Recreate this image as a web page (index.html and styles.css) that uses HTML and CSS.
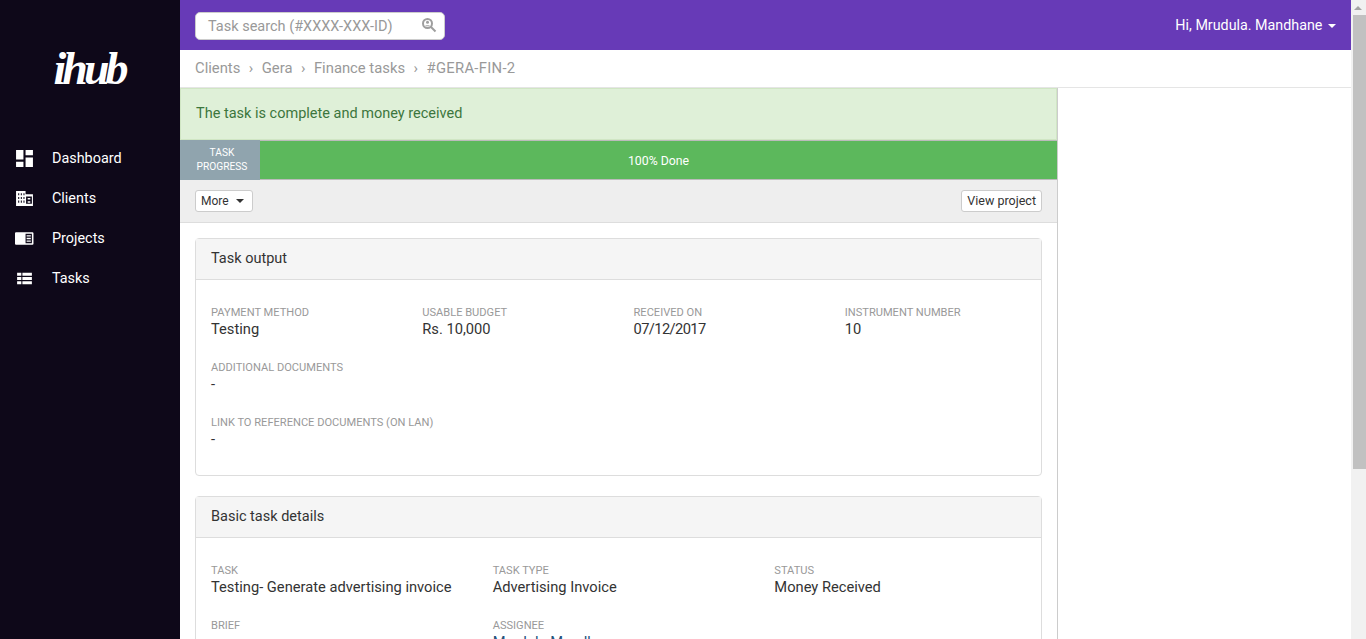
FILE: index.html
```html
<!DOCTYPE html>
<html lang="en">
<head>
    <title>Task details</title>
    <link rel="stylesheet" href="styles.css">
</head>
<body>
    <div class="app">
        <div class="sidebar">
            <div class="logo">ihub</div>
            <div class="nav">
                <a class="nav-item" href="#">
                    <svg class="nav-icon" viewBox="0 0 18 18"><path d="M1 1h7v9H1zM10 1h7v5h-7zM10 8h7v9h-7zM1 12h7v5H1z" fill="#fff"/></svg>
                    Dashboard
                </a>
                <a class="nav-item" href="#">
                    <svg class="nav-icon" viewBox="0 0 18 18"><path fill-rule="evenodd" d="M1 2h9v3h7v11H1zM3 4v2h1V4zM5.500 4v2h1V4zM8 4v2h1V4zM3 7.500v2h1v-2zM5.500 7.500v2h1v-2zM8 7.500v2h1v-2zM3 11v2h1v-2zM5.500 11v2h1v-2zM8 11v2h1v-2zM10.500 7v7H16V7zM12 8.500h2.500v1.500H12zM12 11.500h2.500V13H12z" fill="#fff"/></svg>
                    Clients
                </a>
                <a class="nav-item" href="#">
                    <svg class="nav-icon" viewBox="0 0 18 18"><path fill-rule="evenodd" d="M1 3h15.500a1 1 0 0 1 1 1v10a1 1 0 0 1-1 1H1a1 1 0 0 1-1-1V4a1 1 0 0 1 1-1zM10 4.500v9h6v-9zM11 6h4v1.200h-4zM11 8.400h4v1.200h-4zM11 10.800h4V12h-4z" fill="#fff"/></svg>
                    Projects
                </a>
                <a class="nav-item" href="#">
                    <svg class="nav-icon" viewBox="0 0 18 18"><path d="M2 3.500h4v3H2zM7 3.500h9v3H7zM2 7.500h4v3H2zM7 7.500h9v3H7zM2 11.500h4v3H2zM7 11.500h9v3H7z" fill="#fff"/></svg>
                    Tasks
                </a>
            </div>
        </div>
        <div class="main">
            <div class="topbar">
                <div class="search">
                    <span class="search-text">Task search (#XXXX-XXX-ID)</span>
                    <svg class="search-icon" viewBox="0 0 16 16"><circle cx="6.500" cy="6.500" r="4.500" fill="none" stroke="#9e9e9e" stroke-width="2"/><circle cx="6.500" cy="5.200" r="1.500" fill="#9e9e9e"/><path d="M3.800 9.200c.6-1.400 4.800-1.400 5.400 0z" fill="#9e9e9e"/><path d="M10 10l4.500 4.500" stroke="#9e9e9e" stroke-width="2"/></svg>
                </div>
                <div class="user">Hi, Mrudula. Mandhane <span class="caret"></span></div>
            </div>
            <div class="breadcrumb">
                <span>Clients</span><span class="sep">›</span>
                <span>Gera</span><span class="sep">›</span>
                <span>Finance tasks</span><span class="sep">›</span>
                <span class="crumb-id">#GERA-FIN-2</span>
            </div>
            <div class="task-pane">
                <div class="alert">The task is complete and money received</div>
                <div class="progress-row">
                    <div class="progress-label">TASK<br>PROGRESS</div>
                    <div class="progress-bar">100% Done</div>
                </div>
                <div class="toolbar">
                    <button class="btn btn-more">More <span class="caret caret-dark"></span></button>
                    <button class="btn">View project</button>
                </div>
                <div class="content">
                    <div class="card">
                        <div class="card-head">Task output</div>
                        <div class="card-body cols-4">
                            <div class="field"><div class="field-label">Payment method</div><div class="field-value">Testing</div></div>
                            <div class="field"><div class="field-label">Usable budget</div><div class="field-value">Rs. 10,000</div></div>
                            <div class="field"><div class="field-label">Received on</div><div class="field-value date">07/12/2017</div></div>
                            <div class="field"><div class="field-label">Instrument number</div><div class="field-value">10</div></div>
                            <div class="field full"><div class="field-label">Additional documents</div><div class="field-value">-</div></div>
                            <div class="field full"><div class="field-label">Link to reference documents (on LAN)</div><div class="field-value">-</div></div>
                        </div>
                    </div>
                    <div class="card">
                        <div class="card-head">Basic task details</div>
                        <div class="card-body cols-3">
                            <div class="field"><div class="field-label">Task</div><div class="field-value">Testing- Generate advertising invoice</div></div>
                            <div class="field"><div class="field-label">Task type</div><div class="field-value">Advertising Invoice</div></div>
                            <div class="field"><div class="field-label">Status</div><div class="field-value">Money Received</div></div>
                            <div class="field"><div class="field-label">Brief</div><div class="field-value">-</div></div>
                            <div class="field"><div class="field-label">Assignee</div><div class="field-value link">Mrudula Mandhane</div></div>
                        </div>
                    </div>
                </div>
            </div>
        </div>
        <div class="scrollbar">
            <div class="scroll-arrow"></div>
            <div class="scroll-thumb"></div>
        </div>
    </div>
</body>
</html>
```
FILE: styles.css
```css
* {
    box-sizing: border-box;
}
html, body {
    margin: 0;
    height: 100%;
    overflow: hidden;
}
body {
    font-family: Roboto, "Open Sans", sans-serif;
    font-size: 14.5px;
    color: #333;
    background-color: #fff;
}
.app {
    display: flex;
    height: 639px;
}
.sidebar {
    width: 180px;
    flex: none;
    background-color: #0e0819;
}
.logo {
    height: 138px;
    padding: 44px 2px 0 0;
    text-align: center;
    font-family: "Liberation Serif", serif;
    font-style: italic;
    font-weight: bold;
    font-size: 46px;
    letter-spacing: -4px;
    line-height: 50px;
    color: #fff;
}
.nav-item {
    display: flex;
    align-items: center;
    gap: 18px;
    height: 40px;
    padding-left: 15px;
    color: #fff;
    font-size: 14.4px;
    text-decoration: none;
}
.nav-icon {
    width: 19px;
    height: 19px;
}
.main {
    flex: 1;
    min-width: 0;
    overflow: hidden;
}
.topbar {
    display: flex;
    align-items: center;
    justify-content: space-between;
    height: 50px;
    padding: 2px 15px 0;
    background-color: #673ab7;
}
.search {
    display: flex;
    align-items: center;
    justify-content: space-between;
    width: 250px;
    height: 28px;
    padding: 0 7px 0 12px;
    background: #fff;
    border: 1px solid #ccc;
    border-radius: 5px;
    color: #999;
}
.search-icon {
    width: 16px;
    height: 16px;
    margin-top: -2px;
}
.user {
    margin-top: -2px;
    color: #fff;
    font-size: 14.3px;
}
.caret {
    display: inline-block;
    margin-left: 2px;
    vertical-align: middle;
    border-top: 4px solid #fff;
    border-left: 4px solid transparent;
    border-right: 4px solid transparent;
}
.caret-dark {
    margin-left: 4px;
    border-top-color: #333;
}
.breadcrumb {
    display: flex;
    align-items: center;
    gap: 8.500px;
    height: 38px;
    padding: 0 0 2px 15px;
    border-bottom: 1px solid #e5e5e5;
    color: #999;
    font-size: 14.8px;
}
.crumb-id {
    letter-spacing: .3px;
}
.sep {
    color: #999;
}
.task-pane {
    width: 878px;
    border-right: 1px solid #ccc;
}
.alert {
    height: 52px;
    padding: 15px 15px;
    line-height: 19px;
    background-color: #dff0d8;
    border: 1px solid #d0e6c4;
    color: #3c763d;
}
.progress-row {
    display: flex;
    height: 40px;
}
.progress-label {
    width: 80px;
    padding: 6px 0 0 4px;
    text-align: center;
    font-size: 10.2px;
    line-height: 14px;
    background-color: #90a4ae;
    color: #fff;
}
.progress-bar {
    flex: 1;
    padding-top: 13px;
    font-size: 12.3px;
    line-height: 14px;
    text-align: center;
    background-color: #5cb85c;
    border-top: 1px solid #bbb;
    border-bottom: 1px solid #bbb;
    color: #fff;
}
.toolbar {
    display: flex;
    align-items: center;
    justify-content: space-between;
    height: 43px;
    padding: 0 15px;
    background-color: #eee;
    border-bottom: 1px solid #ddd;
}
.btn {
    height: 22px;
    padding: 0 5px 1px;
    font-family: inherit;
    font-size: 12.500px;
    color: #333;
    background: #fff;
    border: 1px solid #ccc;
    border-radius: 3px;
}
.btn-more {
    padding-right: 8px;
    font-size: 12px;
}
.content {
    padding: 15px;
}
.card {
    margin-bottom: 20px;
    border: 1px solid #ddd;
    border-radius: 4px;
}
.card-head {
    height: 41px;
    padding: 0 15px;
    line-height: 39px;
    background-color: #f5f5f5;
    border-bottom: 1px solid #ddd;
}
.card-body {
    display: grid;
    padding: 25px 0 26px;
    row-gap: 21px;
}
.cols-4 {
    grid-template-columns: repeat(4, 1fr);
}
.cols-3 {
    grid-template-columns: repeat(3, 1fr);
}
.field {
    padding-left: 15px;
}
.full {
    grid-column: 1 / -1;
}
.field-label {
    font-size: 11.1px;
    line-height: 15px;
    text-transform: uppercase;
    color: #999;
}
.field-value {
    font-size: 14.700px;
    line-height: 19px;
    color: #333;
}
.date {
    letter-spacing: -.6px;
}
.link {
    color: #23527c;
}
.scrollbar {
    width: 15px;
    flex: none;
    padding-left: 2px;
    background-color: #f1f1f1;
}
.scroll-arrow {
    width: 0;
    margin: 6px 0 5px 1px;
    border-bottom: 4px solid #a3a3a3;
    border-left: 4px solid transparent;
    border-right: 4px solid transparent;
}
.scroll-thumb {
    height: 454px;
    background-color: #c1c1c1;
}
```
